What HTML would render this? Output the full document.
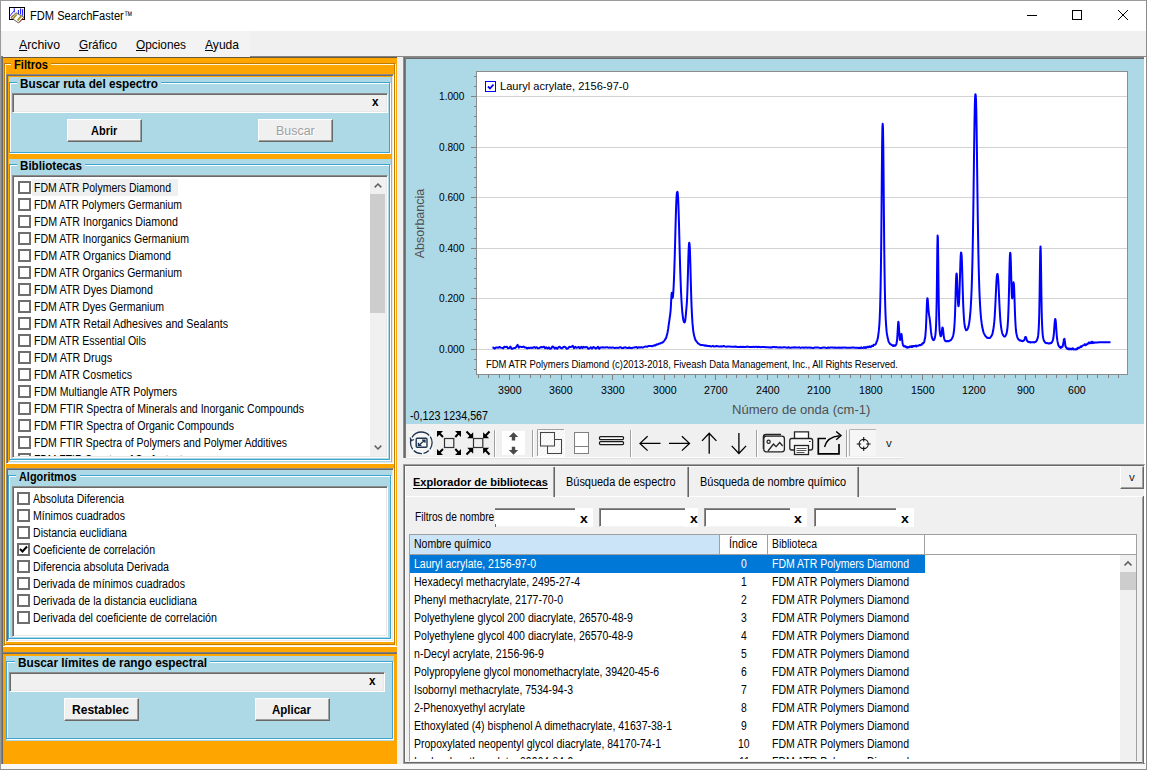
<!DOCTYPE html>
<html lang="es"><head><meta charset="utf-8"><title>FDM SearchFaster</title><style>
html,body{margin:0;padding:0;background:#fff;}
body{width:1161px;height:777px;position:relative;overflow:hidden;font-family:"Liberation Sans", sans-serif;font-size:11px;color:#000;}
div,svg,span.t{position:absolute;}
span.t{white-space:pre;transform-origin:0 0;}
u{text-decoration:underline;text-underline-offset:1px;}
</style></head><body>
<div style="left:0px;top:0px;width:1147px;height:770px;background:#f0f0f0;"></div>
<div style="left:0px;top:0px;width:1147px;height:1px;background:#9a9a9a;"></div>
<div style="left:0px;top:0px;width:1px;height:770px;background:#9a9a9a;"></div>
<div style="left:1146px;top:0px;width:1px;height:770px;background:#8c8c8c;"></div>
<div style="left:0px;top:769px;width:1147px;height:1px;background:#8c8c8c;"></div>
<div style="left:1px;top:1px;width:1145px;height:30px;background:#fff;"></div>
<svg style="left:8px;top:6px" width="19" height="19" viewBox="8 6 19 19">
<rect x="9.5" y="7.5" width="15" height="12" fill="#fff" stroke="#000"/>
<path d="M14.3 8.2v4M18.4 9.9v4M20.6 8.6v6M22.6 9.3v6.5" stroke="#2020ff" stroke-width="1.1" fill="none"/>
<path d="M10 15.9L13.8 11.2" stroke="#2020ff" stroke-width="1"/>
<path d="M11 17.7L15.9 12.8 23.9 17.2 18.5 23z" fill="#fff" stroke="#222" stroke-width="0.7"/>
<path d="M13 18.6L16.6 14.3M17.5 20.6L21.2 16.2" stroke="#9a9628" stroke-width="1.8"/>
<path d="M11.3 17.3L13.3 15.2M19.3 22.4L23.3 17.9" stroke="#c81818" stroke-width="0.9"/>
</svg>
<span class="t" style="left:30.00px;top:8.04px;font-size:12.3px;line-height:16px;transform:scaleX(0.9030);">FDM SearchFaster</span>
<span class="t" style="left:124.30px;top:8.04px;font-size:12.3px;line-height:16px;transform:scaleX(0.6912);">™</span>
<svg style="left:1020px;top:4px" width="115" height="24" viewBox="0 0 115 24">
<path d="M7 11.5h10" stroke="#000" stroke-width="1"/>
<rect x="52.5" y="6.5" width="9" height="9" fill="none" stroke="#000" stroke-width="1"/>
<path d="M98 6l10 10M108 6l-10 10" stroke="#000" stroke-width="1"/>
</svg>
<div style="left:1px;top:31px;width:1145px;height:25px;background:#f0f0f0;"></div>
<div style="left:3px;top:31px;width:247px;height:26px;background:#f3f3f3;"></div>
<span class="t" style="left:19.00px;top:36.77px;font-size:12.2px;line-height:16px;transform:scaleX(1.0088);"><u>A</u>rchivo</span>
<span class="t" style="left:79.00px;top:36.77px;font-size:12.2px;line-height:16px;transform:scaleX(0.9670);"><u>G</u>ráfico</span>
<span class="t" style="left:136.00px;top:36.77px;font-size:12.2px;line-height:16px;transform:scaleX(0.9709);"><u>O</u>pciones</span>
<span class="t" style="left:205.00px;top:36.77px;font-size:12.2px;line-height:16px;transform:scaleX(0.9900);"><u>A</u>yuda</span>
<div style="left:250px;top:56px;width:896px;height:1px;background:#8a8a8a;"></div>
<div style="left:1px;top:56px;width:396px;height:708px;background:#ffa500;"></div>
<div style="left:1px;top:56px;width:396px;height:1px;background:#828282;"></div>
<div style="left:1px;top:57px;width:396px;height:1px;background:#6a5a3a;"></div>
<div style="left:1px;top:56px;width:1px;height:708px;background:#828282;"></div>
<div style="left:2px;top:57px;width:1px;height:707px;background:#696969;"></div>
<div style="left:3px;top:56px;width:247px;height:1px;background:#f3f3f3;"></div>
<div style="left:5px;top:64px;width:391px;height:582px;border:1px solid #fff3d8;box-sizing:border-box;"></div><div style="left:4px;top:63px;width:391px;height:582px;border:1px solid #c07c00;box-sizing:border-box;"></div>
<div style="left:11px;top:58px;width:40px;height:14px;background:#ffa500;"></div>
<span class="t" style="left:14.00px;top:58.34px;font-size:12px;line-height:15px;font-weight:bold;transform:scaleX(0.9271);">Filtros</span>
<div style="left:3px;top:646px;width:394px;height:1px;background:#fff;"></div>
<div style="left:6px;top:74px;width:388px;height:390px;background:#ffa500;box-sizing:border-box;border:1px solid;border-color:#8c8c8c #fff #fff #8c8c8c;box-shadow:inset 1px 1px 0 #696969, inset -1px -1px 0 #e8e8e8;"></div>
<div style="left:9px;top:77px;width:382px;height:77px;background:#add8e6;"></div>
<div style="left:10px;top:83px;width:381px;height:71px;border:1px solid #fff;box-sizing:border-box;"></div><div style="left:9px;top:82px;width:381px;height:71px;border:1px solid #3fa3cf;box-sizing:border-box;"></div>
<div style="left:17px;top:77px;width:144px;height:13px;background:#add8e6;"></div>
<span class="t" style="left:20.00px;top:77.34px;font-size:12px;line-height:15px;font-weight:bold;transform:scaleX(0.9807);">Buscar ruta del espectro</span>
<div style="left:12px;top:93px;width:376px;height:20px;background:#f0f0f0;box-sizing:border-box;border:1px solid;border-color:#8c8c8c #fff #fff #8c8c8c;box-shadow:inset 1px 1px 0 #696969, inset -1px -1px 0 #e8e8e8;"></div>
<span class="t" style="left:372.00px;top:95.34px;font-size:12px;line-height:15px;font-weight:bold;transform:scaleX(0.9720);">x</span>
<div style="left:67px;top:119px;width:75px;height:23px;background:#f0f0f0;box-sizing:border-box;border:1px solid;border-color:#fff #696969 #696969 #fff;box-shadow:inset -1px -1px 0 #a0a0a0;"></div><span class="t" style="left:91.00px;top:123.54px;font-size:12px;line-height:15px;font-weight:bold;transform:scaleX(0.9173);">Abrir</span>
<div style="left:258px;top:119px;width:75px;height:23px;background:#f0f0f0;box-sizing:border-box;border:1px solid;border-color:#fff #696969 #696969 #fff;box-shadow:inset -1px -1px 0 #a0a0a0;"></div><span class="t" style="left:276.00px;top:122.87px;font-size:12.5px;line-height:16px;transform:scaleX(0.9947);color:#a0a0a0;text-shadow:1px 1px 0 #fff;">Buscar</span>
<div style="left:9px;top:159px;width:382px;height:303px;background:#add8e6;"></div>
<div style="left:10px;top:165px;width:381px;height:296px;border:1px solid #fff;box-sizing:border-box;"></div><div style="left:9px;top:164px;width:381px;height:296px;border:1px solid #3fa3cf;box-sizing:border-box;"></div>
<div style="left:17px;top:159px;width:68px;height:13px;background:#add8e6;"></div>
<span class="t" style="left:20.00px;top:159.34px;font-size:12px;line-height:15px;font-weight:bold;transform:scaleX(0.9683);">Bibliotecas</span>
<div style="left:12px;top:175px;width:376px;height:283px;background:#fff;box-sizing:border-box;border:1px solid;border-color:#8c8c8c #fff #fff #8c8c8c;box-shadow:inset 1px 1px 0 #696969, inset -1px -1px 0 #e8e8e8;"></div>
<div style="left:32px;top:179px;width:146px;height:17px;background:#f0f0f0;"></div>
<div style="left:14px;top:177px;width:356px;height:279px;overflow:hidden;"><div style="left:4px;top:4px;width:13px;height:13px;background:#fff;box-sizing:border-box;border:2px solid #6e6e6e;"></div><span class="t" style="left:20.00px;top:2.57px;font-size:12.5px;line-height:16px;transform:scaleX(0.8405);">FDM ATR Polymers Diamond</span><div style="left:4px;top:21px;width:13px;height:13px;background:#fff;box-sizing:border-box;border:2px solid #6e6e6e;"></div><span class="t" style="left:20.00px;top:19.57px;font-size:12.5px;line-height:16px;transform:scaleX(0.8302);">FDM ATR Polymers Germanium</span><div style="left:4px;top:38px;width:13px;height:13px;background:#fff;box-sizing:border-box;border:2px solid #6e6e6e;"></div><span class="t" style="left:20.00px;top:36.57px;font-size:12.5px;line-height:16px;transform:scaleX(0.8542);">FDM ATR Inorganics Diamond</span><div style="left:4px;top:55px;width:13px;height:13px;background:#fff;box-sizing:border-box;border:2px solid #6e6e6e;"></div><span class="t" style="left:20.00px;top:53.57px;font-size:12.5px;line-height:16px;transform:scaleX(0.8430);">FDM ATR Inorganics Germanium</span><div style="left:4px;top:72px;width:13px;height:13px;background:#fff;box-sizing:border-box;border:2px solid #6e6e6e;"></div><span class="t" style="left:20.00px;top:70.57px;font-size:12.5px;line-height:16px;transform:scaleX(0.8513);">FDM ATR Organics Diamond</span><div style="left:4px;top:89px;width:13px;height:13px;background:#fff;box-sizing:border-box;border:2px solid #6e6e6e;"></div><span class="t" style="left:20.00px;top:87.57px;font-size:12.5px;line-height:16px;transform:scaleX(0.8399);">FDM ATR Organics Germanium</span><div style="left:4px;top:106px;width:13px;height:13px;background:#fff;box-sizing:border-box;border:2px solid #6e6e6e;"></div><span class="t" style="left:20.00px;top:104.57px;font-size:12.5px;line-height:16px;transform:scaleX(0.8537);">FDM ATR Dyes Diamond</span><div style="left:4px;top:123px;width:13px;height:13px;background:#fff;box-sizing:border-box;border:2px solid #6e6e6e;"></div><span class="t" style="left:20.00px;top:121.57px;font-size:12.5px;line-height:16px;transform:scaleX(0.8406);">FDM ATR Dyes Germanium</span><div style="left:4px;top:140px;width:13px;height:13px;background:#fff;box-sizing:border-box;border:2px solid #6e6e6e;"></div><span class="t" style="left:20.00px;top:138.57px;font-size:12.5px;line-height:16px;transform:scaleX(0.8574);">FDM ATR Retail Adhesives and Sealants</span><div style="left:4px;top:157px;width:13px;height:13px;background:#fff;box-sizing:border-box;border:2px solid #6e6e6e;"></div><span class="t" style="left:20.00px;top:155.57px;font-size:12.5px;line-height:16px;transform:scaleX(0.8413);">FDM ATR Essential Oils</span><div style="left:4px;top:174px;width:13px;height:13px;background:#fff;box-sizing:border-box;border:2px solid #6e6e6e;"></div><span class="t" style="left:20.00px;top:172.57px;font-size:12.5px;line-height:16px;transform:scaleX(0.8595);">FDM ATR Drugs</span><div style="left:4px;top:191px;width:13px;height:13px;background:#fff;box-sizing:border-box;border:2px solid #6e6e6e;"></div><span class="t" style="left:20.00px;top:189.57px;font-size:12.5px;line-height:16px;transform:scaleX(0.8467);">FDM ATR Cosmetics</span><div style="left:4px;top:208px;width:13px;height:13px;background:#fff;box-sizing:border-box;border:2px solid #6e6e6e;"></div><span class="t" style="left:20.00px;top:206.57px;font-size:12.5px;line-height:16px;transform:scaleX(0.8414);">FDM Multiangle ATR Polymers</span><div style="left:4px;top:225px;width:13px;height:13px;background:#fff;box-sizing:border-box;border:2px solid #6e6e6e;"></div><span class="t" style="left:20.00px;top:223.57px;font-size:12.5px;line-height:16px;transform:scaleX(0.8449);">FDM FTIR Spectra of Minerals and Inorganic Compounds</span><div style="left:4px;top:242px;width:13px;height:13px;background:#fff;box-sizing:border-box;border:2px solid #6e6e6e;"></div><span class="t" style="left:20.00px;top:240.57px;font-size:12.5px;line-height:16px;transform:scaleX(0.8443);">FDM FTIR Spectra of Organic Compounds</span><div style="left:4px;top:259px;width:13px;height:13px;background:#fff;box-sizing:border-box;border:2px solid #6e6e6e;"></div><span class="t" style="left:20.00px;top:257.57px;font-size:12.5px;line-height:16px;transform:scaleX(0.8392);">FDM FTIR Spectra of Polymers and Polymer Additives</span><div style="left:4px;top:276px;width:13px;height:13px;background:#fff;box-sizing:border-box;border:2px solid #6e6e6e;"></div><span class="t" style="left:20.00px;top:274.57px;font-size:12.5px;line-height:16px;transform:scaleX(0.8300);">FDM FTIR Spectra of Surfactants</span></div>
<div style="left:370px;top:177px;width:16px;height:279px;background:#f0f0f0;"></div><div style="left:370px;top:194px;width:15px;height:119px;background:#cdcdcd;"></div><svg style="left:370px;top:177px" width="16" height="17" viewBox="0 0 17 17"><path d="M5 10.5l3.5-3.5 3.5 3.5" stroke="#606060" stroke-width="1.6" fill="none"/></svg><svg style="left:370px;top:439px" width="16" height="17" viewBox="0 0 17 17"><path d="M5 6.5l3.5 3.5 3.5-3.5" stroke="#606060" stroke-width="1.6" fill="none"/></svg>
<div style="left:6px;top:468px;width:388px;height:174px;background:#add8e6;box-sizing:border-box;border:1px solid;border-color:#8c8c8c #fff #fff #8c8c8c;box-shadow:inset 1px 1px 0 #696969, inset -1px -1px 0 #e8e8e8;"></div>
<div style="left:9px;top:476px;width:383px;height:164px;border:1px solid #fff;box-sizing:border-box;"></div><div style="left:8px;top:475px;width:383px;height:164px;border:1px solid #3fa3cf;box-sizing:border-box;"></div>
<div style="left:16px;top:470px;width:64px;height:13px;background:#add8e6;"></div>
<span class="t" style="left:19.00px;top:470.34px;font-size:12px;line-height:15px;font-weight:bold;transform:scaleX(0.9077);">Algoritmos</span>
<div style="left:12px;top:486px;width:376px;height:151px;background:#fff;box-sizing:border-box;border:1px solid;border-color:#8c8c8c #fff #fff #8c8c8c;box-shadow:inset 1px 1px 0 #696969, inset -1px -1px 0 #e8e8e8;"></div>
<div style="left:17px;top:492px;width:13px;height:13px;background:#fff;box-sizing:border-box;border:2px solid #6e6e6e;"></div>
<span class="t" style="left:33.00px;top:490.57px;font-size:12.5px;line-height:16px;transform:scaleX(0.8394);">Absoluta Diferencia</span>
<div style="left:17px;top:509px;width:13px;height:13px;background:#fff;box-sizing:border-box;border:2px solid #6e6e6e;"></div>
<span class="t" style="left:33.00px;top:507.57px;font-size:12.5px;line-height:16px;transform:scaleX(0.8434);">Mínimos cuadrados</span>
<div style="left:17px;top:526px;width:13px;height:13px;background:#fff;box-sizing:border-box;border:2px solid #6e6e6e;"></div>
<span class="t" style="left:33.00px;top:524.57px;font-size:12.5px;line-height:16px;transform:scaleX(0.8454);">Distancia euclidiana</span>
<div style="left:17px;top:543px;width:13px;height:13px;background:#fff;box-sizing:border-box;border:2px solid #6e6e6e;"></div><svg style="left:17px;top:543px" width="13" height="13" viewBox="0 0 13 13"><path d="M3 6l2.5 2.5L10 3.5" stroke="#000" stroke-width="2" fill="none"/></svg>
<span class="t" style="left:33.00px;top:541.57px;font-size:12.5px;line-height:16px;transform:scaleX(0.8441);">Coeficiente de correlación</span>
<div style="left:17px;top:560px;width:13px;height:13px;background:#fff;box-sizing:border-box;border:2px solid #6e6e6e;"></div>
<span class="t" style="left:33.00px;top:558.57px;font-size:12.5px;line-height:16px;transform:scaleX(0.8473);">Diferencia absoluta Derivada</span>
<div style="left:17px;top:577px;width:13px;height:13px;background:#fff;box-sizing:border-box;border:2px solid #6e6e6e;"></div>
<span class="t" style="left:33.00px;top:575.57px;font-size:12.5px;line-height:16px;transform:scaleX(0.8447);">Derivada de mínimos cuadrados</span>
<div style="left:17px;top:594px;width:13px;height:13px;background:#fff;box-sizing:border-box;border:2px solid #6e6e6e;"></div>
<span class="t" style="left:33.00px;top:592.57px;font-size:12.5px;line-height:16px;transform:scaleX(0.8489);">Derivada de la distancia euclidiana</span>
<div style="left:17px;top:611px;width:13px;height:13px;background:#fff;box-sizing:border-box;border:2px solid #6e6e6e;"></div>
<span class="t" style="left:33.00px;top:609.57px;font-size:12.5px;line-height:16px;transform:scaleX(0.8542);">Derivada del coeficiente de correlación</span>
<div style="left:1px;top:652px;width:396px;height:1px;background:#828282;"></div>
<div style="left:2px;top:653px;width:395px;height:1px;background:#696969;"></div>
<div style="left:6px;top:656px;width:388px;height:85px;background:#add8e6;"></div>
<div style="left:7px;top:662px;width:387px;height:78px;border:1px solid #fff;box-sizing:border-box;"></div><div style="left:6px;top:661px;width:387px;height:78px;border:1px solid #3fa3cf;box-sizing:border-box;"></div>
<div style="left:15px;top:656px;width:195px;height:13px;background:#add8e6;"></div>
<span class="t" style="left:18.00px;top:656.34px;font-size:12px;line-height:15px;font-weight:bold;transform:scaleX(0.9840);">Buscar límites de rango espectral</span>
<div style="left:9px;top:672px;width:376px;height:20px;background:#f0f0f0;box-sizing:border-box;border:1px solid;border-color:#8c8c8c #fff #fff #8c8c8c;box-shadow:inset 1px 1px 0 #696969, inset -1px -1px 0 #e8e8e8;"></div>
<span class="t" style="left:369.00px;top:674.34px;font-size:12px;line-height:15px;font-weight:bold;transform:scaleX(0.9720);">x</span>
<div style="left:64px;top:698px;width:75px;height:23px;background:#f0f0f0;box-sizing:border-box;border:1px solid;border-color:#fff #696969 #696969 #fff;box-shadow:inset -1px -1px 0 #a0a0a0;"></div><span class="t" style="left:72.40px;top:702.54px;font-size:12px;line-height:15px;font-weight:bold;transform:scaleX(1.0035);">Restablec</span>
<div style="left:255px;top:698px;width:75px;height:23px;background:#f0f0f0;box-sizing:border-box;border:1px solid;border-color:#fff #696969 #696969 #fff;box-shadow:inset -1px -1px 0 #a0a0a0;"></div><span class="t" style="left:272.40px;top:702.54px;font-size:12px;line-height:15px;font-weight:bold;transform:scaleX(0.9585);">Aplicar</span>
<div style="left:1px;top:764px;width:1145px;height:5px;background:#f8f8f8;"></div>
<div style="left:397px;top:57px;width:7px;height:707px;background:#f0f0f0;"></div>
<div style="left:404px;top:57px;width:740px;height:367px;background:#add8e6;"></div>
<div style="left:404px;top:57px;width:740px;height:1px;background:#828282;"></div>
<div style="left:404px;top:58px;width:740px;height:1px;background:#696969;"></div>
<div style="left:403px;top:57px;width:1px;height:401px;background:#909090;"></div>
<div style="left:404px;top:57px;width:1px;height:401px;background:#696969;"></div>
<div style="left:405px;top:58px;width:1px;height:400px;background:#7c7c7c;"></div>
<div style="left:1144px;top:57px;width:2px;height:708px;background:#fff;"></div>
<div style="left:476px;top:71px;width:652px;height:304px;background:#fff;box-sizing:border-box;border:1px solid #8c8c8c;"></div>
<svg style="left:0;top:0" width="1161" height="777" viewBox="0 0 1161 777"><path d="M477 96.5H1127" stroke="#d2d2d2" stroke-width="1"/><path d="M477 147.5H1127" stroke="#d2d2d2" stroke-width="1"/><path d="M477 197.5H1127" stroke="#d2d2d2" stroke-width="1"/><path d="M477 248.5H1127" stroke="#d2d2d2" stroke-width="1"/><path d="M477 298.5H1127" stroke="#d2d2d2" stroke-width="1"/><path d="M477 349.5H1127" stroke="#d2d2d2" stroke-width="1"/><path d="M474 369.5H476 M474 359.5H476 M471 349.5H476 M474 339.5H476 M474 329.5H476 M474 319.5H476 M474 309.5H476 M471 298.5H476 M474 288.5H476 M474 278.5H476 M474 268.5H476 M474 258.5H476 M471 248.5H476 M474 238.5H476 M474 228.5H476 M474 217.5H476 M474 207.5H476 M471 197.5H476 M474 187.5H476 M474 177.5H476 M474 167.5H476 M474 157.5H476 M471 147.5H476 M474 136.5H476 M474 126.5H476 M474 116.5H476 M474 106.5H476 M471 96.5H476 M474 86.5H476 M474 76.5H476 M478.5 375V378 M488.5 375V378 M499.5 375V378 M509.5 375V380 M519.5 375V378 M530.5 375V378 M540.5 375V378 M550.5 375V378 M561.5 375V380 M571.5 375V378 M581.5 375V378 M592.5 375V378 M602.5 375V378 M612.5 375V380 M623.5 375V378 M633.5 375V378 M643.5 375V378 M653.5 375V378 M664.5 375V380 M674.5 375V378 M684.5 375V378 M695.5 375V378 M705.5 375V378 M715.5 375V380 M726.5 375V378 M736.5 375V378 M746.5 375V378 M757.5 375V378 M767.5 375V380 M777.5 375V378 M788.5 375V378 M798.5 375V378 M808.5 375V378 M819.5 375V380 M829.5 375V378 M839.5 375V378 M850.5 375V378 M860.5 375V378 M870.5 375V380 M881.5 375V378 M891.5 375V378 M901.5 375V378 M911.5 375V378 M922.5 375V380 M932.5 375V378 M942.5 375V378 M953.5 375V378 M963.5 375V378 M973.5 375V380 M984.5 375V378 M994.5 375V378 M1004.5 375V378 M1015.5 375V378 M1025.5 375V380 M1035.5 375V378 M1046.5 375V378 M1056.5 375V378 M1066.5 375V378 M1077.5 375V380 M1087.5 375V378 M1097.5 375V378 M1108.5 375V378 M1118.5 375V378" stroke="#808080" stroke-width="1" fill="none"/><path d="M492.4 347.5 493.6 347.7 494.8 348.6 496.0 347.5 497.2 347.6 498.4 347.8 499.6 346.9 500.8 347.6 502.0 347.9 503.2 348.3 504.4 346.7 505.6 347.2 506.8 346.7 508.0 348.3 509.2 348.1 510.4 346.6 511.6 348.7 512.8 348.7 514.0 348.0 515.2 347.9 516.4 346.8 517.6 344.9 518.8 347.7 520.0 346.6 521.2 346.9 522.4 347.0 523.6 346.6 524.8 347.6 526.0 347.5 527.2 348.4 528.4 347.7 529.6 348.0 530.8 347.6 532.0 348.0 533.2 347.5 534.4 347.1 535.6 348.0 536.8 347.2 538.0 348.4 539.2 348.1 540.4 347.2 541.6 347.0 542.8 347.2 544.0 346.7 545.2 348.3 546.4 347.4 547.6 348.5 548.8 347.4 550.0 348.7 551.2 348.5 552.4 346.5 553.6 347.0 554.8 348.6 556.0 347.6 557.2 348.8 558.4 347.4 559.6 346.7 560.8 348.0 562.0 348.3 563.2 347.2 564.4 346.7 565.6 347.3 566.8 348.8 568.0 348.3 569.2 346.8 570.4 347.1 571.6 346.8 572.8 345.8 574.0 348.2 575.2 346.9 576.4 347.8 577.6 347.6 578.8 347.0 580.0 348.2 581.2 346.8 582.4 348.0 583.6 346.8 584.8 347.5 586.0 347.0 587.2 347.2 588.4 348.8 589.6 348.4 590.8 347.2 592.0 348.6 593.2 347.0 594.4 347.5 595.6 348.5 596.8 348.0 598.0 346.8 599.2 348.8 600.4 347.4 601.6 347.5 602.8 347.3 604.0 347.4 605.2 347.5 606.4 347.3 607.6 347.3 608.8 347.8 610.0 347.4 611.2 347.8 612.4 347.6 613.6 347.6 614.8 348.1 616.0 347.7 617.2 347.7 618.4 348.0 619.6 347.3 620.8 347.3 622.0 348.1 623.2 348.0 624.4 347.4 625.6 347.3 626.8 347.9 628.0 348.1 629.2 347.3 630.4 348.1 631.6 348.0 632.8 347.7 634.0 347.5 635.2 347.2 636.4 347.1 637.6 348.0 638.8 347.2 640.0 347.7 641.2 347.1 642.4 347.5 643.6 347.2 644.8 346.7 646.0 346.4 647.2 346.8 648.4 346.0 649.6 346.0 650.8 346.1 652.0 346.2 653.2 345.8 654.4 345.2 655.6 345.5 656.2 344.7 656.8 344.3 657.4 344.4 658.0 344.4 658.6 343.8 659.2 343.7 659.8 343.6 660.4 343.5 661.0 342.9 661.6 342.7 662.2 342.7 662.8 342.3 663.4 341.7 664.0 341.1 664.6 340.4 664.9 339.7 665.2 339.2 665.5 338.6 665.8 338.6 666.1 337.7 666.4 337.1 666.7 335.6 667.0 334.9 667.3 333.5 667.6 332.2 667.9 330.3 668.2 328.9 668.5 326.2 668.8 324.3 669.1 322.2 669.4 320.1 669.7 317.9 670.0 315.8 670.3 313.6 670.6 310.6 670.9 306.0 671.2 300.2 671.5 294.7 671.8 292.7 672.1 294.0 672.4 297.2 672.7 297.9 673.0 296.0 673.3 292.5 673.6 287.3 673.9 281.0 674.2 273.2 674.5 263.9 674.8 254.0 675.1 243.2 675.4 231.7 675.7 220.4 676.0 210.1 676.3 202.1 676.6 196.2 676.9 192.9 677.2 192.1 677.5 191.9 677.8 194.0 678.1 197.8 678.4 204.9 678.7 213.9 679.0 224.5 679.3 236.3 679.6 247.8 679.9 259.0 680.2 269.4 680.5 278.2 680.8 286.0 681.1 293.1 681.4 299.2 681.7 304.0 682.0 308.2 682.3 312.2 682.6 314.9 682.9 317.2 683.2 319.4 683.5 320.5 683.8 321.8 684.1 322.1 684.4 322.5 684.7 322.4 685.0 321.6 685.3 320.0 685.6 317.3 685.9 314.2 686.2 310.5 686.5 307.2 686.8 303.6 687.1 298.3 687.4 290.9 687.7 281.5 688.0 271.1 688.3 259.9 688.6 250.7 688.9 245.0 689.2 242.8 689.5 243.5 689.8 247.5 690.1 255.5 690.4 266.0 690.7 277.6 691.0 289.1 691.3 299.0 691.6 306.8 691.9 313.3 692.2 318.6 692.5 323.4 692.8 326.4 693.1 329.6 693.4 331.8 693.7 333.5 694.0 335.3 694.3 336.2 694.6 337.3 694.9 338.5 695.2 339.0 695.5 340.2 696.1 340.9 696.7 341.7 697.3 342.4 697.9 343.3 698.5 343.6 699.1 344.1 699.7 344.4 700.3 344.8 700.9 345.1 701.5 345.1 702.1 344.9 702.7 345.2 703.3 345.2 703.9 345.2 704.5 345.5 705.1 345.8 705.7 345.5 706.3 345.6 706.9 345.7 707.5 346.0 708.1 345.9 708.7 346.0 709.3 346.2 709.9 346.0 710.5 346.2 711.7 346.4 712.9 345.9 714.1 346.5 715.3 346.4 716.5 346.0 717.7 346.2 718.9 346.4 720.1 346.5 721.3 346.3 722.5 346.4 723.7 346.0 724.9 346.4 726.1 346.7 727.3 346.5 728.5 346.6 729.7 346.4 730.9 346.7 732.1 346.8 733.3 346.7 734.5 346.8 735.7 346.5 736.9 346.9 738.1 347.0 739.3 347.0 740.5 346.8 741.7 346.9 742.9 346.7 744.1 347.1 745.3 347.0 746.5 346.8 747.7 346.6 748.9 346.9 750.1 346.9 751.3 347.1 752.5 346.9 753.7 346.7 754.9 347.2 756.1 346.7 757.3 347.2 758.5 346.8 759.7 346.9 760.9 347.2 762.1 346.9 763.3 346.9 764.5 347.1 765.7 347.3 766.9 347.3 768.1 347.3 769.3 347.4 770.5 347.2 771.7 347.5 772.9 347.0 774.1 347.1 775.3 347.3 776.5 347.1 777.7 347.4 778.9 347.4 780.1 347.3 781.3 347.5 782.5 347.4 783.7 347.3 784.9 347.3 786.1 347.6 787.3 347.7 788.5 347.3 789.7 347.7 790.9 347.7 792.1 347.5 793.3 347.5 794.5 347.3 795.7 347.5 796.9 347.5 798.1 347.6 799.3 347.3 800.5 347.9 801.7 347.6 802.9 347.5 804.1 347.8 805.3 347.6 806.5 347.6 807.7 347.7 808.9 347.4 810.1 347.7 811.3 347.6 812.5 347.9 813.7 347.9 814.9 347.5 816.1 347.6 817.3 347.4 818.5 347.6 819.7 347.9 820.9 347.9 822.1 347.7 823.3 347.6 824.5 347.5 825.7 347.8 826.9 348.0 828.1 347.5 829.3 347.9 830.5 347.4 831.7 347.5 832.9 347.6 834.1 347.8 835.3 347.6 836.5 347.7 837.7 347.8 838.9 347.5 840.1 347.9 841.3 347.5 842.5 347.8 843.7 347.6 844.9 347.6 846.1 347.8 847.3 347.7 848.5 347.7 849.7 347.7 850.9 347.8 852.1 347.5 853.3 347.6 854.5 347.8 855.7 347.8 856.9 347.7 858.1 347.9 859.3 347.7 860.5 348.1 861.1 347.3 861.7 347.9 862.3 347.9 862.9 348.0 863.5 347.3 864.1 347.2 864.7 347.9 865.3 347.0 865.9 347.9 866.5 347.7 867.1 346.7 867.7 346.8 868.3 347.3 868.9 346.6 869.5 346.3 870.1 347.1 870.7 346.5 871.3 346.8 871.9 345.8 872.5 345.9 873.1 346.0 873.7 344.8 874.3 344.7 874.9 344.7 875.5 344.3 876.1 343.5 876.7 341.3 877.0 341.0 877.3 340.3 877.6 338.9 877.9 337.8 878.2 335.6 878.5 333.4 878.8 330.9 879.1 327.5 879.4 324.0 879.7 318.4 880.0 311.1 880.3 300.7 880.6 287.3 880.9 269.1 881.2 245.4 881.5 214.6 881.8 179.6 882.1 146.9 882.4 127.4 882.7 123.8 883.0 127.9 883.3 147.6 883.6 178.8 883.9 213.9 884.2 244.9 884.5 269.2 884.8 287.7 885.1 300.4 885.4 311.1 885.7 318.6 886.0 323.3 886.3 327.8 886.6 331.4 886.9 333.5 887.2 335.3 887.5 336.9 887.8 338.6 888.1 339.1 888.4 341.1 888.7 341.7 889.3 342.8 889.9 343.8 890.5 344.2 891.1 344.4 891.7 345.0 892.3 345.2 892.9 345.9 893.2 345.8 893.5 345.2 893.8 346.0 894.1 345.8 894.4 345.8 894.7 345.8 895.0 345.2 895.3 345.7 895.6 345.4 895.9 344.8 896.2 344.4 896.5 343.5 896.8 341.7 897.1 339.8 897.4 335.5 897.7 330.6 898.0 325.1 898.3 321.8 898.6 322.6 898.9 326.7 899.2 332.2 899.5 336.1 899.8 339.4 900.1 340.0 900.4 339.1 900.7 337.6 901.0 335.1 901.3 333.9 901.6 334.3 901.9 337.4 902.2 340.2 902.5 342.7 902.8 344.3 903.1 345.5 903.4 345.0 903.7 346.1 904.0 346.5 904.3 346.1 904.6 346.5 904.9 346.2 905.2 346.4 905.5 346.7 905.8 346.4 906.1 346.7 906.4 347.5 906.7 347.1 907.0 347.0 907.3 347.6 907.6 347.1 908.2 347.5 908.8 347.1 909.4 347.2 910.0 346.3 910.6 346.8 911.2 347.0 911.8 346.0 912.4 347.0 913.0 346.0 913.6 346.3 914.2 345.9 914.8 346.2 915.4 346.2 916.0 345.5 916.6 346.4 917.2 345.7 917.8 345.7 918.4 345.7 919.0 345.2 919.6 345.0 920.2 345.3 920.8 344.9 921.4 344.4 921.7 344.7 922.0 344.1 922.3 343.5 922.6 343.6 922.9 343.1 923.2 342.9 923.5 343.2 923.8 342.2 924.1 342.2 924.4 341.2 924.7 339.2 925.0 338.5 925.3 336.3 925.6 332.8 925.9 328.8 926.2 322.3 926.5 314.2 926.8 306.1 927.1 300.2 927.4 298.2 927.7 299.1 928.0 303.1 928.3 307.7 928.6 311.5 928.9 313.8 929.2 315.7 929.5 317.3 929.8 319.6 930.1 322.1 930.4 325.2 930.7 328.5 931.0 331.7 931.3 333.9 931.6 335.9 931.9 337.4 932.2 338.3 932.5 338.9 932.8 339.6 933.1 339.8 933.4 340.1 933.7 339.9 934.0 339.9 934.3 339.5 934.6 338.7 934.9 337.5 935.2 335.9 935.5 334.0 935.8 330.4 936.1 324.7 936.4 315.3 936.7 299.8 937.0 276.3 937.3 249.3 937.6 235.6 937.9 237.9 938.2 257.7 938.5 284.6 938.8 305.5 939.1 318.8 939.4 326.5 939.7 331.1 940.0 333.5 940.3 335.1 940.6 336.1 940.9 336.3 941.2 335.8 941.5 334.1 941.8 332.0 942.1 329.1 942.4 327.4 942.7 327.7 943.0 329.0 943.3 331.9 943.6 334.8 943.9 337.1 944.2 338.5 944.5 339.5 944.8 340.3 945.1 340.8 945.4 340.7 945.7 340.9 946.0 341.3 946.3 341.3 946.6 341.4 946.9 341.1 947.2 341.2 947.5 341.1 947.8 341.3 948.1 341.1 948.4 341.2 948.7 341.3 949.3 340.7 949.9 340.6 950.5 340.3 950.8 340.2 951.1 339.7 951.4 339.3 951.7 338.8 952.0 338.8 952.3 337.8 952.6 337.1 952.9 336.5 953.2 335.4 953.5 334.1 953.8 332.0 954.1 329.8 954.4 326.0 954.7 321.2 955.0 314.8 955.3 305.6 955.6 294.7 955.9 283.9 956.2 276.3 956.5 273.5 956.8 274.0 957.1 279.7 957.4 288.6 957.7 296.9 958.0 302.7 958.3 306.0 958.6 306.1 958.9 304.0 959.2 299.3 959.5 292.2 959.8 282.8 960.1 272.8 960.4 262.8 960.7 255.7 961.0 252.6 961.3 252.8 961.6 255.1 961.9 261.1 962.2 270.7 962.5 281.8 962.8 292.4 963.1 301.5 963.4 308.8 963.7 314.4 964.0 319.0 964.3 322.4 964.6 324.8 964.9 326.8 965.2 328.0 965.5 328.8 965.8 329.7 966.1 330.2 966.4 330.1 966.7 329.9 967.0 330.0 967.3 329.6 967.9 328.4 968.5 326.6 969.1 323.5 969.7 319.3 970.0 316.2 970.3 313.2 970.6 309.5 970.9 304.5 971.2 298.9 971.5 292.5 971.8 284.4 972.1 274.1 972.4 262.5 972.7 247.9 973.0 231.2 973.3 211.4 973.6 189.0 973.9 165.4 974.2 142.4 974.5 121.7 974.8 106.4 975.1 97.2 975.4 94.2 975.7 95.0 976.0 99.7 976.3 110.8 976.6 128.2 976.9 150.1 977.2 173.8 977.5 197.3 977.8 218.5 978.1 237.6 978.4 253.7 978.7 267.3 979.0 278.5 979.3 287.9 979.6 295.6 979.9 302.0 980.2 307.2 980.5 311.6 980.8 315.5 981.1 318.7 981.4 321.2 981.7 323.5 982.3 327.0 982.9 330.1 983.5 332.3 984.1 333.6 984.7 334.8 985.3 335.8 985.9 336.6 986.5 337.1 987.1 337.9 987.7 337.7 988.3 338.0 988.9 337.9 989.5 338.1 990.1 337.8 990.7 337.0 991.3 336.2 991.9 335.2 992.2 334.5 992.5 333.7 992.8 332.1 993.1 330.8 993.4 329.1 993.7 327.0 994.0 324.5 994.3 321.7 994.6 317.8 994.9 313.1 995.2 307.7 995.5 301.6 995.8 294.9 996.1 288.5 996.4 282.2 996.7 277.7 997.0 275.1 997.3 274.0 997.6 274.0 997.9 275.8 998.2 279.2 998.5 284.1 998.8 290.5 999.1 297.5 999.4 303.8 999.7 309.6 1000.0 314.6 1000.3 319.3 1000.6 322.7 1000.9 325.4 1001.2 327.8 1001.5 329.7 1001.8 331.1 1002.1 332.7 1002.4 333.6 1002.7 334.2 1003.0 334.8 1003.3 335.5 1003.6 335.9 1004.2 336.5 1004.8 336.5 1005.1 336.4 1005.4 335.9 1005.7 335.5 1006.0 335.0 1006.3 334.2 1006.6 333.4 1006.9 331.8 1007.2 330.0 1007.5 327.6 1007.8 323.7 1008.1 318.9 1008.4 311.9 1008.7 303.0 1009.0 290.6 1009.3 277.1 1009.6 264.1 1009.9 255.6 1010.2 252.7 1010.5 254.0 1010.8 261.0 1011.1 272.0 1011.4 283.7 1011.7 292.6 1012.0 297.7 1012.3 298.4 1012.6 295.6 1012.9 289.8 1013.2 284.6 1013.5 282.2 1013.8 283.5 1014.1 287.0 1014.4 295.3 1014.7 304.7 1015.0 313.8 1015.3 320.8 1015.6 325.7 1015.9 329.7 1016.2 332.1 1016.5 334.0 1016.8 335.3 1017.1 336.5 1017.4 337.4 1017.7 338.2 1018.0 338.6 1018.3 339.2 1018.6 339.2 1018.9 339.7 1019.2 339.9 1019.5 340.4 1019.8 340.5 1020.1 340.5 1020.4 340.3 1020.7 340.6 1021.0 340.9 1021.3 340.7 1021.6 340.9 1021.9 340.9 1022.2 340.7 1022.5 341.2 1022.8 341.1 1023.1 340.8 1023.4 340.9 1023.7 340.6 1024.0 340.4 1024.3 340.0 1024.6 339.1 1024.9 338.1 1025.2 337.2 1025.5 337.0 1025.8 336.9 1026.1 337.6 1026.4 338.9 1026.7 339.7 1027.0 340.8 1027.3 341.1 1027.6 341.5 1027.9 341.5 1028.2 342.0 1028.5 341.7 1028.8 341.8 1029.1 341.9 1029.4 342.2 1029.7 342.3 1030.0 342.1 1030.3 342.2 1030.6 342.5 1030.9 342.4 1031.2 342.2 1031.5 342.2 1031.8 342.2 1032.4 342.2 1033.0 342.3 1033.6 342.1 1034.2 342.5 1034.8 342.1 1035.1 342.0 1035.4 341.9 1035.7 341.8 1036.0 341.6 1036.3 341.1 1036.6 340.7 1036.9 340.3 1037.2 339.4 1037.5 338.7 1037.8 337.6 1038.1 335.9 1038.4 333.1 1038.7 328.9 1039.0 322.4 1039.3 311.5 1039.6 294.9 1039.9 272.3 1040.2 252.5 1040.5 246.4 1040.8 252.4 1041.1 272.5 1041.4 295.3 1041.7 312.1 1042.0 322.6 1042.3 329.0 1042.6 333.5 1042.9 336.3 1043.2 338.0 1043.5 339.2 1043.8 340.2 1044.1 340.7 1044.4 341.6 1044.7 342.1 1045.0 342.2 1045.3 342.6 1045.6 342.8 1045.9 342.7 1046.2 343.2 1046.5 343.2 1046.8 343.0 1047.4 343.1 1048.0 343.3 1048.6 343.5 1049.2 343.5 1049.8 343.3 1050.1 343.5 1050.4 343.1 1050.7 343.1 1051.0 342.7 1051.3 343.0 1051.6 342.3 1051.9 342.3 1052.2 341.7 1052.5 341.2 1052.8 340.4 1053.1 339.1 1053.4 337.8 1053.7 335.5 1054.0 332.1 1054.3 327.9 1054.6 323.3 1054.9 320.5 1055.2 319.0 1055.5 319.7 1055.8 321.6 1056.1 325.8 1056.4 330.6 1056.7 334.5 1057.0 338.0 1057.3 340.2 1057.6 341.9 1057.9 343.3 1058.2 344.7 1058.5 345.5 1058.8 346.0 1059.1 346.3 1059.4 346.9 1059.7 347.2 1060.0 347.2 1060.3 347.5 1060.6 347.9 1060.9 346.7 1061.2 347.0 1061.5 347.4 1061.8 346.8 1062.1 347.0 1062.4 346.9 1062.7 345.7 1063.0 345.2 1063.3 343.2 1063.6 341.5 1063.9 339.2 1064.2 339.2 1064.5 338.8 1064.8 341.8 1065.1 343.2 1065.4 346.2 1065.7 346.7 1066.0 347.1 1066.3 347.5 1066.6 348.1 1066.9 348.4 1067.2 348.7 1067.5 348.8 1067.8 348.4 1068.1 349.3 1068.4 349.1 1068.7 349.2 1069.0 348.5 1069.3 348.6 1069.6 348.8 1069.9 349.4 1070.2 348.8 1070.5 348.8 1071.1 348.7 1071.7 349.5 1072.3 348.6 1072.9 348.2 1073.5 349.3 1074.1 349.6 1074.7 349.4 1075.3 349.2 1075.9 349.5 1076.5 348.8 1077.1 349.2 1077.7 348.0 1078.3 347.8 1078.9 348.0 1079.5 347.7 1080.1 347.2 1080.7 346.3 1081.3 347.0 1081.9 346.4 1082.5 345.6 1083.1 345.4 1083.7 345.2 1084.3 344.7 1084.9 344.1 1085.5 345.2 1086.1 345.0 1086.7 344.2 1087.3 344.2 1087.9 343.2 1088.5 343.5 1089.1 342.3 1089.7 343.1 1090.3 342.8 1090.9 343.3 1091.5 341.9 1092.1 343.0 1092.7 341.9 1093.3 342.5 1093.9 343.1 1094.5 342.4 1095.1 342.4 1095.7 342.4 1096.3 342.4 1096.9 342.4 1097.5 342.4 1098.1 342.4 1098.7 342.3 1099.3 342.3 1099.9 342.3 1100.5 342.3 1101.1 342.3 1101.7 342.3 1102.3 342.3 1102.9 342.3 1103.5 342.3 1104.1 342.3 1104.7 342.3 1105.3 342.3 1105.9 342.3 1106.5 342.3 1107.1 342.3 1107.7 342.3 1108.3 342.3 1108.9 342.3 1109.5 342.3 1110.1 342.3 1110.5 342.3" stroke="#0000ff" stroke-width="2" fill="none" stroke-linejoin="round"/><rect x="485.5" y="81.5" width="10" height="10" fill="#fff" stroke="#0000ff"/><path d="M488 86.5l2 2 3.5-4" stroke="#0000ff" stroke-width="1.8" fill="none"/></svg>
<span class="t" style="left:439.20px;top:89.36px;font-size:10.5px;line-height:14px;transform:scaleX(0.9665);">1.000</span>
<span class="t" style="left:439.20px;top:140.36px;font-size:10.5px;line-height:14px;transform:scaleX(0.9665);">0.800</span>
<span class="t" style="left:439.20px;top:190.36px;font-size:10.5px;line-height:14px;transform:scaleX(0.9665);">0.600</span>
<span class="t" style="left:439.20px;top:241.36px;font-size:10.5px;line-height:14px;transform:scaleX(0.9665);">0.400</span>
<span class="t" style="left:439.20px;top:291.36px;font-size:10.5px;line-height:14px;transform:scaleX(0.9665);">0.200</span>
<span class="t" style="left:439.20px;top:342.36px;font-size:10.5px;line-height:14px;transform:scaleX(0.9665);">0.000</span>
<span class="t" style="left:497.70px;top:383.36px;font-size:10.5px;line-height:14px;transform:scaleX(1.0103);">3900</span>
<span class="t" style="left:549.30px;top:383.36px;font-size:10.5px;line-height:14px;transform:scaleX(1.0103);">3600</span>
<span class="t" style="left:600.90px;top:383.36px;font-size:10.5px;line-height:14px;transform:scaleX(1.0103);">3300</span>
<span class="t" style="left:652.50px;top:383.36px;font-size:10.5px;line-height:14px;transform:scaleX(1.0103);">3000</span>
<span class="t" style="left:704.10px;top:383.36px;font-size:10.5px;line-height:14px;transform:scaleX(1.0103);">2700</span>
<span class="t" style="left:755.70px;top:383.36px;font-size:10.5px;line-height:14px;transform:scaleX(1.0103);">2400</span>
<span class="t" style="left:807.30px;top:383.36px;font-size:10.5px;line-height:14px;transform:scaleX(1.0103);">2100</span>
<span class="t" style="left:858.90px;top:383.36px;font-size:10.5px;line-height:14px;transform:scaleX(1.0103);">1800</span>
<span class="t" style="left:910.50px;top:383.36px;font-size:10.5px;line-height:14px;transform:scaleX(1.0103);">1500</span>
<span class="t" style="left:962.10px;top:383.36px;font-size:10.5px;line-height:14px;transform:scaleX(1.0103);">1200</span>
<span class="t" style="left:1016.65px;top:383.36px;font-size:10.5px;line-height:14px;transform:scaleX(1.0096);">900</span>
<span class="t" style="left:1068.25px;top:383.36px;font-size:10.5px;line-height:14px;transform:scaleX(1.0096);">600</span>
<span class="t" style="left:732.40px;top:402.07px;font-size:12.5px;line-height:16px;transform:scaleX(1.0429);color:#505050;">Número de onda (cm-1)</span>
<span class="t" style="left:500.30px;top:79.36px;font-size:10.5px;line-height:14px;transform:scaleX(1.0549);">Lauryl acrylate, 2156-97-0</span>
<span class="t" style="left:486.00px;top:358.04px;font-size:10px;line-height:13px;transform:scaleX(0.9459);">FDM ATR Polymers Diamond (c)2013-2018, Fiveash Data Management, Inc., All Rights Reserved.</span>
<span class="t" style="left:410.00px;top:407.67px;font-size:12.5px;line-height:16px;transform:scaleX(0.8566);">-0,123 1234,567</span>
<div style="left:382.17px;top:214.80px;width:75.06px;height:17px;transform:rotate(-90deg) scaleX(0.9259);transform-origin:50% 50%;text-align:center;font-size:13.5px;line-height:17px;color:#505050;white-space:nowrap;">Absorbancia</div>
<div style="left:406px;top:424px;width:738px;height:34px;background:#f0f0f0;"></div>
<div style="left:406px;top:457px;width:497px;height:1px;background:#fdfdfd;"></div>
<div style="left:406px;top:458px;width:497px;height:1px;background:#e0e0e0;"></div>
<div style="left:494px;top:430px;width:1px;height:27px;background:#a0a0a0;"></div><div style="left:495px;top:430px;width:1px;height:27px;background:#fff;"></div>
<div style="left:532px;top:430px;width:1px;height:27px;background:#a0a0a0;"></div><div style="left:533px;top:430px;width:1px;height:27px;background:#fff;"></div>
<div style="left:630px;top:430px;width:1px;height:27px;background:#a0a0a0;"></div><div style="left:631px;top:430px;width:1px;height:27px;background:#fff;"></div>
<div style="left:756px;top:430px;width:1px;height:27px;background:#a0a0a0;"></div><div style="left:757px;top:430px;width:1px;height:27px;background:#fff;"></div>
<div style="left:846px;top:430px;width:1px;height:27px;background:#a0a0a0;"></div><div style="left:847px;top:430px;width:1px;height:27px;background:#fff;"></div>
<svg style="left:404px;top:424px" width="520" height="36" viewBox="404 424 520 36"><rect x="409" y="431" width="24" height="24" fill="#f7f7f7"/><circle cx="421.3" cy="442.8" r="10.8" fill="none" stroke="#1f3550" stroke-width="1.3" stroke-dasharray="7 1.6 6 1.6 9 1.6 11 1.6 20 1.6 6 0"/><path d="M410.2 437.5l0.6 3.4 3.2-1.4" fill="none" stroke="#1f3550" stroke-width="1.2"/><rect x="416.2" y="438.3" width="10.8" height="9" rx="1" fill="none" stroke="#1f3550" stroke-width="1.4"/><path d="M418.6 445.2l6-4.6M422 440.2h3v2.6M418.4 442.8v2.6h3" fill="none" stroke="#1f3550" stroke-width="1.3"/><rect x="444.5" y="438.5" width="9.3" height="9.0" fill="#f0f0f0" stroke="#333" stroke-width="1.2"/><path d="M443.0 437.0L438.0 432.0M455.3 437.0L460.0 432.0M443.0 449.0L438.0 454.0M455.3 449.0L460.0 454.0" stroke="#000" stroke-width="2" fill="none"/><path d="M437.0 431.0 L443.0 431.0 L437.0 437.0 ZM461.0 431.0 L455.0 431.0 L461.0 437.0 ZM437.0 455.0 L443.0 455.0 L437.0 449.0 ZM461.0 455.0 L455.0 455.0 L461.0 449.0 Z" fill="#000"/><rect x="473.5" y="438.5" width="9.3" height="9.0" fill="#f0f0f0" stroke="#333" stroke-width="1.2"/><path d="M466.5 431.5L472.0 437.0M489.5 431.5L484.3 437.0M466.5 454.5L472.0 449.0M489.5 454.5L484.3 449.0" stroke="#000" stroke-width="2" fill="none"/><path d="M473.2 438.2 L467.2 438.2 L473.2 432.2 ZM483.1 438.2 L489.1 438.2 L483.1 432.2 ZM473.2 447.8 L467.2 447.8 L473.2 453.8 ZM483.1 447.8 L489.1 447.8 L483.1 453.8 Z" fill="#000"/><rect x="502" y="431" width="23" height="24" fill="#fff"/><path d="M513.5 432.2l-4.7 4.8h3v3.6h3.4v-3.6h3z M513.5 454.8l-4.7-4.8h3v-3.2h3.4v3.2h3z" fill="#4a4a4a"/><defs><pattern id="hatch" width="4" height="4" patternUnits="userSpaceOnUse"><rect width="4" height="4" fill="#fbfbfb"/><path d="M0 4L4 0" stroke="#f0f0f0" stroke-width="1"/></pattern></defs><rect x="537" y="429" width="27" height="27" fill="url(#hatch)"/><path d="M537.5 456V429.5H564" fill="none" stroke="#a0a0a0"/><path d="M564.5 429.5V456.5H537" fill="none" stroke="#fff"/><rect x="540.5" y="432.5" width="14" height="13.5" fill="none" stroke="#444" stroke-width="1.05"/><path d="M554.5 439.5h7v14h-14v-7.5" fill="none" stroke="#444" stroke-width="1.05"/><rect x="574.5" y="432.5" width="14" height="21" fill="#fff" stroke="#808080" stroke-width="1"/><path d="M574.5 446.5H588.5" stroke="#808080" stroke-width="1"/><rect x="599.5" y="436.5" width="24" height="3" rx="1" fill="#fafafa" stroke="#1a1a1a" stroke-width="1.25"/><rect x="599.5" y="441.5" width="24" height="3" rx="1" fill="#fafafa" stroke="#1a1a1a" stroke-width="1.25"/><path d="M640 443.4H660.5M647.6 436.3L640 443.4l7.6 7.2" fill="none" stroke="#000" stroke-width="1.3"/><path d="M669 443.4H689.5M681.9 436.3L689.5 443.4l-7.6 7.2" fill="none" stroke="#000" stroke-width="1.3"/><path d="M709.2 453.8V433.3M702 440.9L709.2 433.3l7.2 7.6" fill="none" stroke="#000" stroke-width="1.3"/><path d="M738.9 433V453.5M731.7 445.9L738.9 453.5l7.2-7.6" fill="none" stroke="#000" stroke-width="1.3"/><path d="M763.5 449V437a2.5 2.5 0 0 1 2.5-2.5h15" fill="none" stroke="#222" stroke-width="1.6"/><rect x="763.8" y="436.2" width="20.6" height="15.6" rx="2.5" fill="#f4f4f4" stroke="#222" stroke-width="1.3"/><circle cx="768.6" cy="441.8" r="1.6" fill="none" stroke="#222" stroke-width="1.2"/><path d="M768 451l5.5-7 2.6 2.6 3.6-4 3 3.4" fill="none" stroke="#222" stroke-width="1.3"/><path d="M794.5 438.5V431.8H808.5V438.5" fill="#fff" stroke="#222" stroke-width="1.3"/><rect x="789.8" y="438.5" width="22.8" height="11.5" rx="2" fill="#f8f8f8" stroke="#222" stroke-width="1.3"/><rect x="794.5" y="445.5" width="14" height="9" fill="#fff" stroke="#222" stroke-width="1.3"/><path d="M796.5 448.5h10M796.5 450.5h10M796.5 452.5h8" stroke="#444" stroke-width="0.9"/><path d="M809 441.5h1.6" stroke="#222" stroke-width="1.2"/><path d="M826 438.5H818.3V453.8H839V444" fill="none" stroke="#000" stroke-width="1.7"/><path d="M824.5 447c1.5-6 6.5-10.5 15-11.3" fill="none" stroke="#000" stroke-width="1.4"/><path d="M836.2 431.5L841 435.6l-4.8 4.2" fill="none" stroke="#000" stroke-width="1.4"/><rect x="849" y="429" width="27" height="27" fill="#f6f6f6"/><path d="M849.5 456V429.5H876" fill="none" stroke="#b4b4b4"/><circle cx="863.7" cy="444" r="4.6" fill="none" stroke="#111" stroke-width="1.1"/><path d="M863.7 437v4.4M863.7 446.6v4.4M856.7 444h4.4M866.3 444h4.4" stroke="#111" stroke-width="1.1"/></svg>
<span class="t" style="left:885.70px;top:436.02px;font-size:11.5px;line-height:15px;transform:scaleX(1.0087);color:#222;">v</span>
<div style="left:403px;top:464px;width:742px;height:1px;background:#a0a0a0;"></div>
<div style="left:404px;top:465px;width:740px;height:1px;background:#696969;"></div>
<div style="left:403px;top:464px;width:1px;height:300px;background:#a0a0a0;"></div>
<div style="left:404px;top:465px;width:1px;height:298px;background:#696969;"></div>
<div style="left:405px;top:466px;width:738px;height:1px;background:#fbfbfb;"></div>
<div style="left:405px;top:466px;width:1px;height:296px;background:#fbfbfb;"></div>
<div style="left:404px;top:762px;width:740px;height:1px;background:#696969;"></div>
<div style="left:403px;top:763px;width:742px;height:1px;background:#a0a0a0;"></div>
<div style="left:1142px;top:497px;width:1px;height:266px;background:#a0a0a0;"></div>
<div style="left:1143px;top:496px;width:1px;height:268px;background:#696969;"></div>
<div style="left:406px;top:496px;width:736px;height:1px;background:#fff;"></div>
<div style="left:553px;top:467px;width:1px;height:30px;background:#a0a0a0;"></div>
<div style="left:554px;top:467px;width:1px;height:30px;background:#646464;"></div>
<div style="left:687px;top:467px;width:1px;height:30px;background:#a0a0a0;"></div>
<div style="left:688px;top:467px;width:1px;height:30px;background:#646464;"></div>
<div style="left:857px;top:467px;width:1px;height:30px;background:#a0a0a0;"></div>
<div style="left:858px;top:467px;width:1px;height:30px;background:#646464;"></div>
<span class="t" style="left:413.20px;top:474.88px;font-size:11.3px;line-height:15px;font-weight:bold;transform:scaleX(0.9760);text-decoration:underline;text-underline-offset:1.5px;text-decoration-thickness:1px;">Explorador de bibliotecas</span>
<span class="t" style="left:566.00px;top:473.87px;font-size:12.5px;line-height:16px;transform:scaleX(0.8753);">Búsqueda de espectro</span>
<span class="t" style="left:700.00px;top:473.87px;font-size:12.5px;line-height:16px;transform:scaleX(0.8754);">Búsqueda de nombre químico</span>
<div style="left:1120px;top:466px;width:24px;height:23px;background:#f0f0f0;box-sizing:border-box;border:1px solid;border-color:#f0f0f0 #696969 #696969 #fff;box-shadow:inset -1px -1px 0 #a0a0a0;"></div>
<span class="t" style="left:1128.80px;top:469.72px;font-size:11.5px;line-height:15px;transform:scaleX(1.0087);color:#222;">v</span>
<span class="t" style="left:415.20px;top:508.97px;font-size:12.5px;line-height:16px;transform:scaleX(0.8143);">Filtros de nombre</span>
<div style="left:495px;top:508px;width:80px;height:19px;background:#fff;box-sizing:border-box;border-top:1px solid #8c8c8c;border-bottom:1px solid #f4f4f4;box-shadow:inset 0 1px 0 #696969;"></div><div style="left:495px;top:524px;width:1px;height:3px;background:#696969;"></div><div style="left:575px;top:508px;width:18px;height:19px;background:#fff;"></div><span class="t" style="left:579.70px;top:510.10px;font-size:13px;line-height:17px;font-weight:bold;transform:scaleX(1.0782);">x</span>
<div style="left:599px;top:508px;width:86px;height:19px;background:#fff;box-sizing:border-box;border-top:1px solid #8c8c8c;border-left:1px solid #8c8c8c;border-bottom:1px solid #f4f4f4;box-shadow:inset 1px 1px 0 #696969;"></div><div style="left:685px;top:508px;width:13px;height:19px;background:#fff;"></div><span class="t" style="left:689.70px;top:510.10px;font-size:13px;line-height:17px;font-weight:bold;transform:scaleX(1.0782);">x</span>
<div style="left:704px;top:508px;width:86px;height:19px;background:#fff;box-sizing:border-box;border-top:1px solid #8c8c8c;border-left:1px solid #8c8c8c;border-bottom:1px solid #f4f4f4;box-shadow:inset 1px 1px 0 #696969;"></div><div style="left:790px;top:508px;width:17px;height:19px;background:#fff;"></div><span class="t" style="left:794.30px;top:510.10px;font-size:13px;line-height:17px;font-weight:bold;transform:scaleX(1.0782);">x</span>
<div style="left:814px;top:508px;width:82px;height:19px;background:#fff;box-sizing:border-box;border-top:1px solid #8c8c8c;border-left:1px solid #8c8c8c;border-bottom:1px solid #f4f4f4;box-shadow:inset 1px 1px 0 #696969;"></div><div style="left:896px;top:508px;width:18px;height:19px;background:#fff;"></div><span class="t" style="left:900.50px;top:510.10px;font-size:13px;line-height:17px;font-weight:bold;transform:scaleX(1.0782);">x</span>
<div style="left:409px;top:534px;width:728px;height:227px;background:#fff;box-sizing:border-box;border:1px solid #a0a0a0;border-bottom:none;"></div>
<div style="left:410px;top:535px;width:309px;height:19px;background:#cce4f7;"></div>
<div style="left:719px;top:535px;width:1px;height:19px;background:#a0a0a0;"></div>
<div style="left:767px;top:535px;width:1px;height:19px;background:#a0a0a0;"></div>
<div style="left:924px;top:535px;width:1px;height:19px;background:#a0a0a0;"></div>
<div style="left:410px;top:554px;width:726px;height:1px;background:#a0a0a0;"></div>
<span class="t" style="left:414.00px;top:536.07px;font-size:12.5px;line-height:16px;transform:scaleX(0.8397);">Nombre químico</span>
<span class="t" style="left:729.00px;top:536.07px;font-size:12.5px;line-height:16px;transform:scaleX(0.8543);">Índice</span>
<span class="t" style="left:772.00px;top:536.07px;font-size:12.5px;line-height:16px;transform:scaleX(0.8302);">Biblioteca</span>
<div style="left:410px;top:555px;width:515px;height:18px;background:#0078d7;"></div>
<div style="left:410px;top:555px;width:710px;height:204.4px;overflow:hidden;"><span class="t" style="left:4.00px;top:0.67px;font-size:12.5px;line-height:16px;transform:scaleX(0.8400);color:#fff;">Lauryl acrylate, 2156-97-0</span><span class="t" style="left:331.11px;top:0.67px;font-size:12.5px;line-height:16px;transform:scaleX(0.8300);color:#fff;">0</span><span class="t" style="left:362.00px;top:0.67px;font-size:12.5px;line-height:16px;transform:scaleX(0.8405);color:#fff;">FDM ATR Polymers Diamond</span><span class="t" style="left:4.00px;top:18.67px;font-size:12.5px;line-height:16px;transform:scaleX(0.8412);">Hexadecyl methacrylate, 2495-27-4</span><span class="t" style="left:331.11px;top:18.67px;font-size:12.5px;line-height:16px;transform:scaleX(0.8300);">1</span><span class="t" style="left:362.00px;top:18.67px;font-size:12.5px;line-height:16px;transform:scaleX(0.8405);">FDM ATR Polymers Diamond</span><span class="t" style="left:4.00px;top:36.67px;font-size:12.5px;line-height:16px;transform:scaleX(0.8409);">Phenyl methacrylate, 2177-70-0</span><span class="t" style="left:331.11px;top:36.67px;font-size:12.5px;line-height:16px;transform:scaleX(0.8300);">2</span><span class="t" style="left:362.00px;top:36.67px;font-size:12.5px;line-height:16px;transform:scaleX(0.8405);">FDM ATR Polymers Diamond</span><span class="t" style="left:4.00px;top:54.67px;font-size:12.5px;line-height:16px;transform:scaleX(0.8449);">Polyethylene glycol 200 diacrylate, 26570-48-9</span><span class="t" style="left:331.11px;top:54.67px;font-size:12.5px;line-height:16px;transform:scaleX(0.8300);">3</span><span class="t" style="left:362.00px;top:54.67px;font-size:12.5px;line-height:16px;transform:scaleX(0.8405);">FDM ATR Polymers Diamond</span><span class="t" style="left:4.00px;top:72.67px;font-size:12.5px;line-height:16px;transform:scaleX(0.8449);">Polyethylene glycol 400 diacrylate, 26570-48-9</span><span class="t" style="left:331.11px;top:72.67px;font-size:12.5px;line-height:16px;transform:scaleX(0.8300);">4</span><span class="t" style="left:362.00px;top:72.67px;font-size:12.5px;line-height:16px;transform:scaleX(0.8405);">FDM ATR Polymers Diamond</span><span class="t" style="left:4.00px;top:90.67px;font-size:12.5px;line-height:16px;transform:scaleX(0.8466);">n-Decyl acrylate, 2156-96-9</span><span class="t" style="left:331.11px;top:90.67px;font-size:12.5px;line-height:16px;transform:scaleX(0.8300);">5</span><span class="t" style="left:362.00px;top:90.67px;font-size:12.5px;line-height:16px;transform:scaleX(0.8405);">FDM ATR Polymers Diamond</span><span class="t" style="left:4.00px;top:108.67px;font-size:12.5px;line-height:16px;transform:scaleX(0.8395);">Polypropylene glycol monomethacrylate, 39420-45-6</span><span class="t" style="left:331.11px;top:108.67px;font-size:12.5px;line-height:16px;transform:scaleX(0.8300);">6</span><span class="t" style="left:362.00px;top:108.67px;font-size:12.5px;line-height:16px;transform:scaleX(0.8405);">FDM ATR Polymers Diamond</span><span class="t" style="left:4.00px;top:126.67px;font-size:12.5px;line-height:16px;transform:scaleX(0.8382);">Isobornyl methacrylate, 7534-94-3</span><span class="t" style="left:331.11px;top:126.67px;font-size:12.5px;line-height:16px;transform:scaleX(0.8300);">7</span><span class="t" style="left:362.00px;top:126.67px;font-size:12.5px;line-height:16px;transform:scaleX(0.8405);">FDM ATR Polymers Diamond</span><span class="t" style="left:4.00px;top:144.67px;font-size:12.5px;line-height:16px;transform:scaleX(0.8320);">2-Phenoxyethyl acrylate</span><span class="t" style="left:331.11px;top:144.67px;font-size:12.5px;line-height:16px;transform:scaleX(0.8300);">8</span><span class="t" style="left:362.00px;top:144.67px;font-size:12.5px;line-height:16px;transform:scaleX(0.8405);">FDM ATR Polymers Diamond</span><span class="t" style="left:4.00px;top:162.67px;font-size:12.5px;line-height:16px;transform:scaleX(0.8400);">Ethoxylated (4) bisphenol A dimethacrylate, 41637-38-1</span><span class="t" style="left:331.11px;top:162.67px;font-size:12.5px;line-height:16px;transform:scaleX(0.8300);">9</span><span class="t" style="left:362.00px;top:162.67px;font-size:12.5px;line-height:16px;transform:scaleX(0.8405);">FDM ATR Polymers Diamond</span><span class="t" style="left:4.00px;top:180.67px;font-size:12.5px;line-height:16px;transform:scaleX(0.8403);">Propoxylated neopentyl glycol diacrylate, 84170-74-1</span><span class="t" style="left:328.23px;top:180.67px;font-size:12.5px;line-height:16px;transform:scaleX(0.8300);">10</span><span class="t" style="left:362.00px;top:180.67px;font-size:12.5px;line-height:16px;transform:scaleX(0.8405);">FDM ATR Polymers Diamond</span><span class="t" style="left:4.00px;top:198.67px;font-size:12.5px;line-height:16px;transform:scaleX(0.8300);">Isodecyl methacrylate, 29964-84-9</span><span class="t" style="left:328.61px;top:198.67px;font-size:12.5px;line-height:16px;transform:scaleX(0.8300);">11</span><span class="t" style="left:362.00px;top:198.67px;font-size:12.5px;line-height:16px;transform:scaleX(0.8405);">FDM ATR Polymers Diamond</span></div>
<div style="left:1120px;top:555px;width:16px;height:206px;background:#f0f0f0;"></div>
<div style="left:1120px;top:572px;width:16px;height:18px;background:#cdcdcd;"></div>
<svg style="left:1120px;top:555px" width="16" height="17" viewBox="0 0 16 17"><path d="M4.5 10.5l3.5-3.5 3.5 3.5" stroke="#606060" stroke-width="1.6" fill="none"/></svg>
</body></html>
